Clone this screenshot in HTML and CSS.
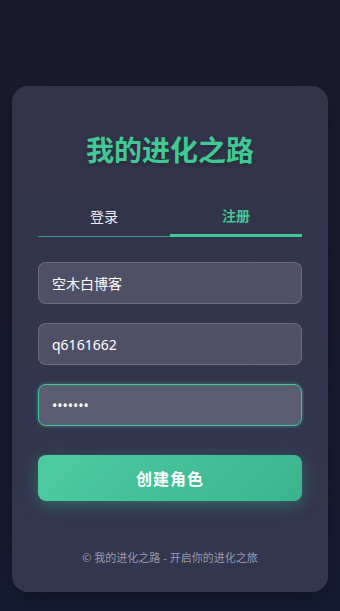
FILE: index.html
```html
<!DOCTYPE html>
<html lang="zh-CN">
<head>
<meta charset="UTF-8">
<meta name="viewport" content="width=device-width, initial-scale=1.0" />
<title>我的进化之路</title>
<link rel="stylesheet" href="styles.css">
</head>
<body>

<div class="carte">
  <h1 class="titre">我的进化之路</h1>

  <div class="onglets">
    <div class="onglet">登录</div>
    <div class="onglet actif">注册</div>
  </div>

  <form class="formulaire">
    <input class="champ" type="text" value="空木白博客">
    <input class="champ" type="text" value="q6161662">
    <input class="champ focus" type="password" value="1234567">
    <button class="bouton" type="button">创建角色</button>
  </form>

  <p class="pied">© 我的进化之路 - 开启你的进化之旅</p>
</div>

</body>
</html>
```

FILE: styles.css
```css
html {
  background: linear-gradient(180deg, #1a1b2e 0%, #1a1b2f 40%, #151c36 100%);
  min-height: 100%;
}

body {
  margin: 0;
  padding: 86px 12px 19px;
  font-family: "Noto Sans", "Noto Sans CJK SC", sans-serif;
  color: #fff;
}

.carte {
  background: linear-gradient(180deg, #33344a 0%, #32364f 100%);
  border-radius: 16px;
  padding: 46px 26px 24px;
  height: 506px;
  box-sizing: border-box;
  box-shadow: 0 8px 30px rgba(0, 0, 0, 0.35);
}

.titre {
  margin: 0 0 29px;
  text-align: center;
  font-size: 28px;
  line-height: 36px;
  font-weight: 700;
  color: #42c896;
  text-shadow: 0 2px 4px rgba(0, 0, 0, 0.25);
}

.onglets {
  display: flex;
  border-bottom: 1px solid rgba(62, 200, 150, 0.7);
}

.onglet {
  flex: 1;
  text-align: center;
  font-size: 14px;
  line-height: 20px;
  padding: 10px 0 9px;
  color: #f0f0f5;
}

.onglet.actif {
  color: #42c896;
  font-weight: 700;
  padding-bottom: 7px;
  border-bottom: 3px solid #42c896;
  margin-bottom: -1px;
  line-height: 18px;
  padding-top: 10px;
}

.formulaire {
  display: flex;
  flex-direction: column;
  margin-top: 25px;
}

.champ {
  height: 42px;
  box-sizing: border-box;
  margin-bottom: 19px;
  padding: 0 13px;
  border: 1px solid rgba(255, 255, 255, 0.16);
  border-radius: 8px;
  background: #4f5065;
  color: #fff;
  font-family: "Noto Sans", "Noto Sans CJK SC", sans-serif;
  font-size: 14px;
  outline: none;
}

.champ.focus {
  background: #5a5d71;
  border-color: #3ec99a;
  box-shadow: 0 0 0 2px rgba(62, 201, 154, 0.18);
  margin-bottom: 29px;
}

.bouton {
  height: 46px;
  border: none;
  border-radius: 8px;
  background: linear-gradient(135deg, #4ecca2 0%, #3ab48e 100%);
  color: #fff;
  font-family: "Noto Sans", "Noto Sans CJK SC", sans-serif;
  font-size: 16px;
  font-weight: 700;
  letter-spacing: 1px;
  box-shadow: 0 4px 16px rgba(62, 201, 154, 0.35);
}

.pied {
  margin: 49px 0 0;
  text-align: center;
  font-size: 11px;
  line-height: 16px;
  color: #9a9cb0;
}
```
